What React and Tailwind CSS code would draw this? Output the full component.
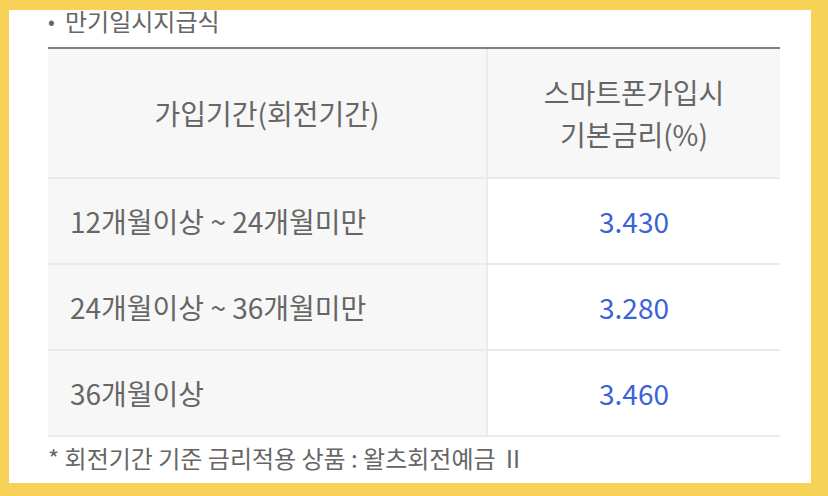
export default function App() {
  const font = { fontFamily: '"Noto Sans CJK KR", "Noto Sans", sans-serif' };
  const rows = [
    ["12개월이상 ~ 24개월미만", "3.430"],
    ["24개월이상 ~ 36개월미만", "3.280"],
    ["36개월이상", "3.460"],
  ];
  return (
    <div
      className="w-[828px] h-[496px] bg-[#f8d257] pt-[10px] pl-[9px] pr-[17px] pb-[13px]"
      style={font}
    >
      <div className="bg-white h-full overflow-hidden pl-[39px] pr-[31px]">
        <div className="flex items-center h-[26px] -mt-[2px] text-[24px] leading-[26px] text-[#666666]">
          <span className="w-[17px] text-[20px]">•</span>
          <span>만기일시지급식</span>
        </div>
        <div className="mt-[13px] border-t-2 border-[#808080]">
          <div className="flex h-[130px] bg-[#f7f7f7] border-b-2 border-[#ebebeb] text-[28px] text-[#666666]">
            <div className="w-[440px] border-r-2 border-[#ebebeb] flex items-center justify-center">
              가입기간(회전기간)
            </div>
            <div className="flex-1 flex flex-col items-center justify-center leading-[42px]">
              <span>스마트폰가입시</span>
              <span>기본금리(%)</span>
            </div>
          </div>
          {rows.map(([label, val]) => (
            <div
              key={label}
              className="flex h-[86px] border-b-2 border-[#ebebeb] text-[28px]"
            >
              <div className="w-[440px] bg-[#f7f7f7] border-r-2 border-[#ebebeb] flex items-center pl-[22px] text-[#666666]">
                {label}
              </div>
              <div className="flex-1 flex items-center justify-center text-[#3b63d8]">
                {val}
              </div>
            </div>
          ))}
        </div>
        <div className="mt-[4px] text-[24px] leading-[34px] text-[#666666]">
          * 회전기간 기준 금리적용 상품 : 왈츠회전예금 Ⅱ
        </div>
      </div>
    </div>
  );
}
